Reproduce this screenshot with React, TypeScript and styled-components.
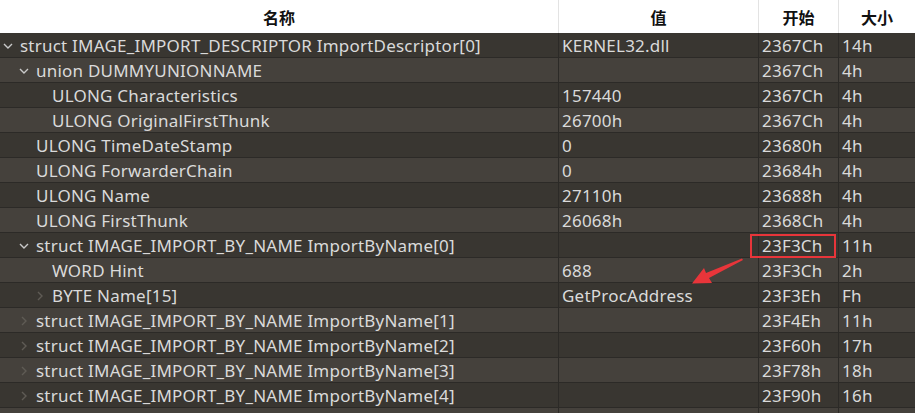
import React from "react";
import styled, { createGlobalStyle } from "styled-components";

const GlobalStyle = createGlobalStyle`
  html, body { margin: 0; padding: 0; background: #393631; }
  body { font-family: "Noto Sans", "Noto Sans CJK SC", sans-serif; }
`;

const COLS = "558px 200px 80px 1fr";

const Wrapper = styled.div`
  position: relative;
  width: 915px;
  height: 413px;
  overflow: hidden;
  background: #393631;
`;

const Header = styled.div`
  display: grid;
  grid-template-columns: ${COLS};
  height: 33px;
  background: #ffffff;
`;

const HeaderCell = styled.div<{ $first?: boolean }>`
  display: flex;
  align-items: center;
  justify-content: center;
  border-left: ${(p) => (p.$first ? "none" : "1px solid #e3e3e3")};
  font-family: "Noto Sans CJK SC", "Noto Sans", sans-serif;
  font-weight: 700;
  font-size: 16px;
  color: #111111;
  padding-top: 1px;
`;

const Row = styled.div<{ $alt: boolean }>`
  display: grid;
  grid-template-columns: ${COLS};
  height: 25px;
  box-sizing: border-box;
  border-bottom: 1px solid #2c2a27;
  background: ${(p) => (p.$alt ? "#45413c" : "#393631")};
`;

const Cell = styled.div<{ $first?: boolean }>`
  display: flex;
  align-items: center;
  border-left: ${(p) => (p.$first ? "none" : "1px solid #2c2a27")};
  padding-left: ${(p) => (p.$first ? "0" : "3px")};
  padding-top: 1px;
  font-size: 17px;
  letter-spacing: 0.22px;
  color: #dadada;
  white-space: nowrap;
  overflow: hidden;
  line-height: 24px;
`;

const Indent = styled.span<{ $level: number }>`
  display: inline-flex;
  align-items: center;
  justify-content: center;
  width: 20px;
  margin-left: ${(p) => p.$level * 16}px;
  flex-shrink: 0;
`;

const Overlay = styled.svg`
  position: absolute;
  left: 0;
  top: 0;
  pointer-events: none;
`;

const Chevron: React.FC<{ state: "open" | "closed" | "none" }> = ({ state }) => {
  if (state === "none") return null;
  if (state === "open")
    return (
      <svg width="12" height="8" viewBox="0 0 12 8" style={{ marginLeft: -4 }}>
        <polyline points="2,2 6,6 10,2" fill="none" stroke="#c9c9c9" strokeWidth="1.4" />
      </svg>
    );
  return (
    <svg width="8" height="12" viewBox="0 0 8 12" style={{ marginLeft: -4 }}>
      <polyline points="2,2 6,6 2,10" fill="none" stroke="#5f5b55" strokeWidth="1.4" />
    </svg>
  );
};

type Item = {
  name: string;
  level: number;
  chev: "open" | "closed" | "none";
  value: string;
  start: string;
  size: string;
};

const items: Item[] = [
  { name: "struct IMAGE_IMPORT_DESCRIPTOR ImportDescriptor[0]", level: 0, chev: "open", value: "KERNEL32.dll", start: "2367Ch", size: "14h" },
  { name: "union DUMMYUNIONNAME", level: 1, chev: "open", value: "", start: "2367Ch", size: "4h" },
  { name: "ULONG Characteristics", level: 2, chev: "none", value: "157440", start: "2367Ch", size: "4h" },
  { name: "ULONG OriginalFirstThunk", level: 2, chev: "none", value: "26700h", start: "2367Ch", size: "4h" },
  { name: "ULONG TimeDateStamp", level: 1, chev: "none", value: "0", start: "23680h", size: "4h" },
  { name: "ULONG ForwarderChain", level: 1, chev: "none", value: "0", start: "23684h", size: "4h" },
  { name: "ULONG Name", level: 1, chev: "none", value: "27110h", start: "23688h", size: "4h" },
  { name: "ULONG FirstThunk", level: 1, chev: "none", value: "26068h", start: "2368Ch", size: "4h" },
  { name: "struct IMAGE_IMPORT_BY_NAME ImportByName[0]", level: 1, chev: "open", value: "", start: "23F3Ch", size: "11h" },
  { name: "WORD Hint", level: 2, chev: "none", value: "688", start: "23F3Ch", size: "2h" },
  { name: "BYTE Name[15]", level: 2, chev: "closed", value: "GetProcAddress", start: "23F3Eh", size: "Fh" },
  { name: "struct IMAGE_IMPORT_BY_NAME ImportByName[1]", level: 1, chev: "closed", value: "", start: "23F4Eh", size: "11h" },
  { name: "struct IMAGE_IMPORT_BY_NAME ImportByName[2]", level: 1, chev: "closed", value: "", start: "23F60h", size: "17h" },
  { name: "struct IMAGE_IMPORT_BY_NAME ImportByName[3]", level: 1, chev: "closed", value: "", start: "23F78h", size: "18h" },
  { name: "struct IMAGE_IMPORT_BY_NAME ImportByName[4]", level: 1, chev: "closed", value: "", start: "23F90h", size: "16h" },
  { name: "", level: 1, chev: "none", value: "", start: "", size: "" },
];

export default function App() {
  return (
    <>
      <GlobalStyle />
      <Wrapper>
        <Header>
          <HeaderCell $first>名称</HeaderCell>
          <HeaderCell>值</HeaderCell>
          <HeaderCell>开始</HeaderCell>
          <HeaderCell>大小</HeaderCell>
        </Header>
        {items.map((it, i) => (
          <Row key={i} $alt={i % 2 === 1}>
            <Cell $first>
              <Indent $level={it.level}>
                <Chevron state={it.chev} />
              </Indent>
              {it.name}
            </Cell>
            <Cell>{it.value}</Cell>
            <Cell>{it.start}</Cell>
            <Cell>{it.size}</Cell>
          </Row>
        ))}
        <Overlay width="915" height="413" viewBox="0 0 915 413">
          <rect x="751" y="235" width="84" height="22" fill="none" stroke="#e8353a" strokeWidth="2" />
          <polygon
            points="742,258.5 743,260 709,278 712,283 692,283.5 704,268 706,273"
            fill="#e8353a"
          />
        </Overlay>
      </Wrapper>
    </>
  );
}
